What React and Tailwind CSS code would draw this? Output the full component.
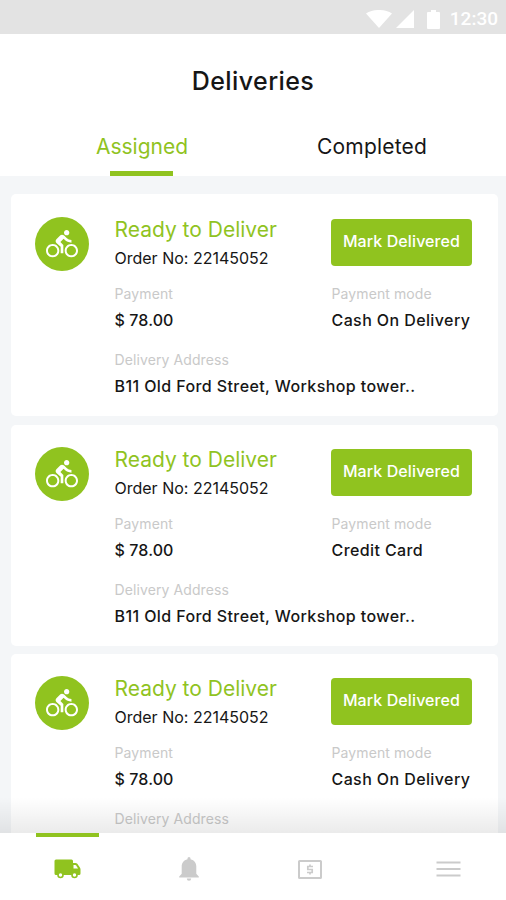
import React, { useState } from 'react';
import { MdDirectionsBike } from 'react-icons/md';

const deliveries = [
  { id: 1, mode: 'Cash On Delivery', address: 'B11 Old Ford Street, Workshop tower..', size: 'h-[222px] mb-[9px] pt-[23px]' },
  { id: 2, mode: 'Credit Card', address: 'B11 Old Ford Street, Workshop tower..', size: 'h-[221px] mb-2 pt-[22px]' },
  { id: 3, mode: 'Cash On Delivery', address: '', size: 'h-[222px] pt-[22px]' }
];

const TruckIcon = () => (
  <svg className="w-[27px] h-5" viewBox="0 0 27 20">
    <path
      d="M2 .5h15.500q1.500 0 1.500 1.500v2h2.500q1 0 1.800.8l2.600 3.700q.6.900.6 1.900V14.500q0 1.500-1.500 1.500H2Q.5 16 .5 14.500V2Q.5.5 2 .5Z"
      fill="currentColor"
    />
    <path d="M19.500 6h1.900q.4 0 .7.400l2 3h-4.600Z" fill="white" />
    <circle cx="6.500" cy="16" r="2.500" fill="white" stroke="currentColor" strokeWidth="1.600" />
    <circle cx="20.500" cy="16" r="2.500" fill="white" stroke="currentColor" strokeWidth="1.600" />
  </svg>
);

const BellIcon = () => (
  <svg className="w-5 h-6" viewBox="0 0 20 24" fill="currentColor">
    <path d="M8.500 2.200V1.500a1.500 1.500 0 0 1 3 0v.7C15.400 3 17.300 6 17.300 9.500v7.300l2.500 2.600v1H.2v-1l2.500-2.600V9.500C2.700 6 4.600 3 8.500 2.200Z" />
    <path d="M7.800 21.500h4.400a2.200 2.200 0 0 1-4.400 0Z" />
  </svg>
);

const MoneyIcon = () => (
  <svg className="w-6 h-[19px]" viewBox="0 0 24 19" fill="none" stroke="currentColor">
    <rect x="1" y="1" width="22" height="17" rx=".6" strokeWidth="2" />
    <path d="M15 6.500H9.800v3h4.400v3H9M12 4.500v2M12 12.500v2" strokeWidth="1.700" />
  </svg>
);

const MenuIcon = () => (
  <svg className="w-[25px] h-[18px]" viewBox="0 0 25 18" stroke="currentColor">
    <path d="M.5 2.500h24M.5 9h24M.5 15.500h24" strokeWidth="2.200" />
  </svg>
);

const StatusBar = () => (
  <div className="h-[34px] bg-[#e3e3e3] flex items-center justify-end pr-2 pt-1 text-white shrink-0">
    <svg className="w-[26px] h-[18px]" viewBox="0 0 26 18" fill="currentColor">
      <path d="M13 18 0 3.5C7-1.2 19-1.2 26 3.5Z" />
    </svg>
    <svg className="w-[18px] h-[18px] ml-[4px]" viewBox="0 0 18 18" fill="currentColor">
      <path d="M18 0v18H0Z" />
    </svg>
    <svg className="w-[13px] h-[19px] ml-[13px]" viewBox="0 0 13 19" fill="currentColor">
      <path d="M4 0h5v2h3q1 0 1 1v15q0 1-1 1H1q-1 0-1-1V3q0-1 1-1h3Z" />
    </svg>
    <span className="ml-[10px] font-['Roboto',sans-serif] text-[19px] leading-5 font-medium">12:30</span>
  </div>
);

const Field = ({ label, value, valueClass }) => (
  <div>
    <p className="text-[14px] leading-[18px] text-[#c9c9c9] tracking-[0.1px]">{label}</p>
    <p className={`mt-[7px] text-[16px] leading-[20px] font-medium whitespace-nowrap ${valueClass}`}>{value}</p>
  </div>
);

const DeliveryCard = ({ mode, address, size }) => (
  <div className={`bg-white rounded-[5px] pl-6 flex shrink-0 ${size}`}>
    <div className="w-[54px] h-[54px] rounded-full bg-[#90c31f] flex items-center justify-center shrink-0">
      <MdDirectionsBike className="w-8 h-8 text-white" />
    </div>
    <div className="ml-[25.5px] flex-1">
      <div className="flex">
        <div className="w-[216.5px] pt-px">
          <h2 className="text-[21px] leading-6 text-[#90c31f] whitespace-nowrap">Ready to Deliver</h2>
          <p className="mt-1.5 text-[16px] leading-5">Order No: 22145052</p>
        </div>
        <button className="mt-[2px] w-[141px] h-[47px] pb-[3px] rounded-[4px] bg-[#90c31f] text-white text-[16px] font-medium tracking-[0.1px] whitespace-nowrap">
          Mark Delivered
        </button>
      </div>
      <div className="mt-[17px] flex">
        <div className="w-[217px]">
          <Field label="Payment" value="$ 78.00" valueClass="tracking-[0.1px]" />
        </div>
        <Field label="Payment mode" value={mode} valueClass="tracking-[0.4px]" />
      </div>
      <div className="mt-[21px]">
        <Field label="Delivery Address" value={address} valueClass="tracking-[0.4px]" />
      </div>
    </div>
  </div>
);

const App = () => {
  const [tab, setTab] = useState('assigned');

  return (
    <div className="h-[900px] w-[506px] overflow-hidden flex flex-col bg-white text-[#161616] font-['Inter',sans-serif]">
      <StatusBar />
      <header className="h-[142px] shrink-0 flex flex-col">
        <h1 className="mt-[32px] text-center text-[25px] leading-[30px] font-medium tracking-[0.4px]">Deliveries</h1>
        <div className="mt-[39px] flex text-[21px] leading-6">
          <button onClick={() => setTab('assigned')} className="w-[284px] text-[#90c31f]">Assigned</button>
          <button onClick={() => setTab('completed')} className="w-[176px] whitespace-nowrap tracking-[0.2px]">Completed</button>
        </div>
        <div className={`mt-3 h-[5px] w-[63px] bg-[#90c31f] ${tab === 'assigned' ? 'ml-[110px]' : 'ml-[340px]'}`} />
      </header>
      <main className="relative h-[657px] shrink-0 overflow-hidden bg-[#f4f6f8] flex flex-col pt-[18px] pl-[11px] pr-2">
        {deliveries.map((d) => (
          <DeliveryCard key={d.id} mode={d.mode} address={d.address} size={d.size} />
        ))}
        <div className="absolute inset-x-0 bottom-0 h-9 bg-linear-to-b from-transparent to-black/8" />
      </main>
      <nav className="h-[67px] shrink-0 bg-white text-[#cbcbcb]">
        <div className="ml-9 w-[63px] h-1 bg-[#90c31f]" />
        <div className="h-[63px] flex items-center pt-[1px]">
          <button className="w-[135px] flex justify-center text-[#90c31f]"><TruckIcon /></button>
          <button className="w-[107px] flex justify-center"><BellIcon /></button>
          <button className="w-[136px] flex justify-center"><MoneyIcon /></button>
          <button className="w-[128px] flex justify-center pl-3"><MenuIcon /></button>
        </div>
      </nav>
    </div>
  );
};

export default App;
